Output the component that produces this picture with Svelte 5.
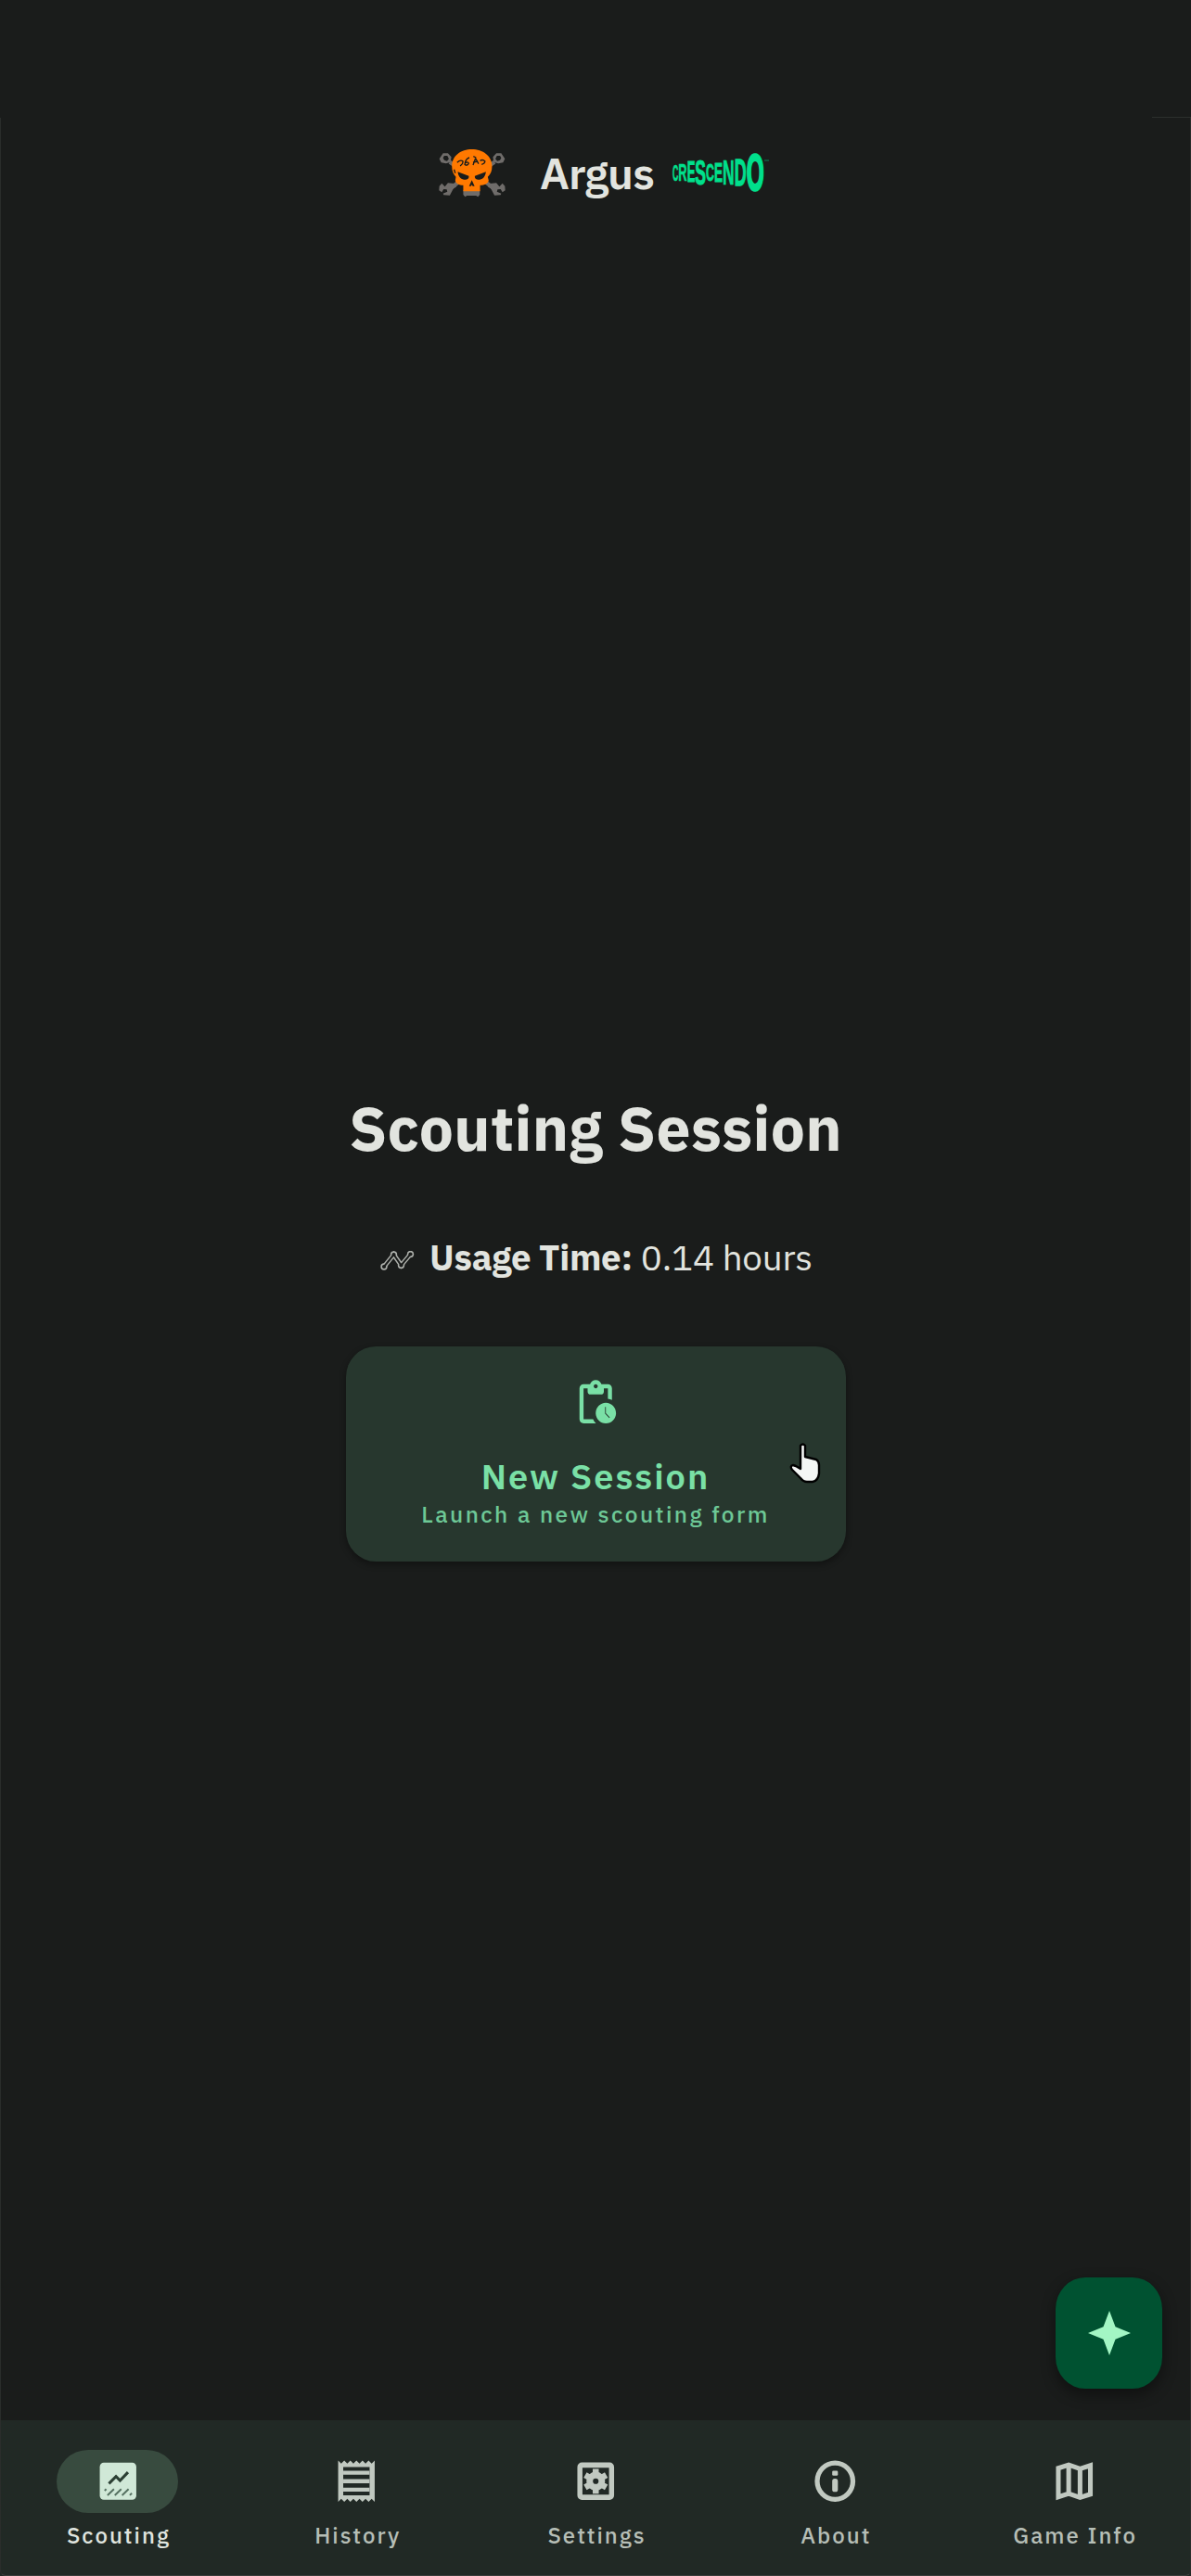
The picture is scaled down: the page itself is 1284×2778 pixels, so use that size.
<script>
  const tabs = [
    { id: 'scouting', label: 'Scouting', active: true },
    { id: 'history', label: 'History' },
    { id: 'settings', label: 'Settings' },
    { id: 'about', label: 'About' },
    { id: 'game', label: 'Game Info' }
  ];

  // Season wordmark: [char, left, slot width, cap top, cap height, stroke, advance at 100px]
  const wordmark = [
    ['C', 0, 19, 40, 52, 0.5, 72.2],
    ['R', 19, 28, 38, 54, 0.4, 72.2],
    ['E', 47, 26, 32, 65, 0.7, 66.7],
    ['S', 73, 35, 28, 76, 0.9, 66.7],
    ['C', 108, 27, 38, 56, 0.6, 72.2],
    ['E', 135, 27, 34, 62, 0.7, 66.7],
    ['N', 162, 38, 26, 78, 0.5, 72.2],
    ['D', 200, 39, 22, 87, 1.1, 72.2],
    ['O', 239, 57, 4, 118, 2, 77.8]
  ];
  const zigzag = 'M4 17L14.500 4L22.500 15.500L32.500 3.500';
  const dots = [[4, 17], [14.5, 4], [22.5, 15.5], [32.5, 3.5]];
</script>

<div class="app">
  <header>
    <svg class="skull" viewBox="68 63 218 156" preserveAspectRatio="none">
      <g stroke="#6f6c6a" fill="none">
        <path d="M104 104L130 122M250 104L224 122M102 194L136 166M252 194L218 166" stroke-width="13" />
        <path d="M82 76L98 76L109 88L107 104L92 109L76 106L70 94ZM272 76L256 76L245 88L247 104L262 109L278 106L284 94Z" stroke-width="0" fill="#6f6c6a" />
      </g>
      <path fill="#6f6c6a" d="M70 182L78 173L88 184L98 172L120 174L126 184L116 190L104 212L84 211L82 206L96 200L94 193L84 192L78 202L69 196ZM284 182L276 173L266 184L256 172L234 174L228 184L238 190L250 212L270 211L272 206L258 200L260 193L270 192L276 202L285 196Z" />
      <g fill="#1a1c1b">
        <path d="M86 84L96 84L101 94L95 101L86 98L82 91ZM268 84L258 84L253 94L259 101L268 98L272 91Z" />
      </g>
      <path fill="#6f6c6a" d="M148 196H202V210L196 217L190 213H160L154 217L148 210Z" />
      <path fill="#ff7900" d="M176 63C140 63 111 84 111 118C111 134 116 145 124 152L122 164C124 174 134 179 148 179V199H203V179C218 179 228 174 231 164L228 152C237 145 242 134 242 118C242 84 212 63 176 63Z" />
      <g fill="#1a1c1b">
        <path d="M130 136L166 149C168 158 160 162 150 161C138 159 132 150 130 136Z" />
        <path d="M222 136L186 149C184 158 192 162 202 161C214 159 220 150 222 136Z" />
        <path d="M176 163L167 182H173L176 178L179 182H185Z" />
      </g>
      <g fill="none" stroke="#1a1c1b" stroke-width="4">
        <path d="M128 106Q138 96 146 101Q150 107 138 117M168 90Q155 94 153 112Q162 118 166 108Q162 102 156 107M181 86L190 90M180 114L188 92L198 110M180 105L196 102M203 100Q212 94 219 102Q218 110 208 112M118 128L122 140" />
      </g>
    </svg>
    <h1>Argus</h1>
    <svg class="wordmark" viewBox="0 0 312 126" preserveAspectRatio="none">
      {#each wordmark as [ch, x, w, top, h, stroke, adv]}
        <text
          transform="translate({x} {top + h}) scale({w / adv} {h / 70})"
          font-size="100"
          stroke-width={stroke}>{ch}</text>
      {/each}
      <path d="M297 27H312" stroke="#00e08c" stroke-width="3" opacity=".5" />
    </svg>
  </header>

  <main>
    <h2>Scouting Session</h2>
    <p class="usage">
      <svg viewBox="0 0 37 21">
        <path d={zigzag} fill="none" stroke="#aeb1ac" stroke-width="5" />
        {#each dots as [cx, cy]}
          <circle {cx} {cy} r="3.700" fill="#aeb1ac" />
        {/each}
        <path d={zigzag} fill="none" stroke="#1a1c1b" stroke-width="2" />
        {#each dots as [cx, cy]}
          <circle {cx} {cy} r="2.100" fill="#1a1c1b" />
        {/each}
      </svg>
      <strong>Usage Time:</strong><span>0.14 hours</span>
    </p>
    <button class="session">
      <svg class="icon" viewBox="0 0 24 24" preserveAspectRatio="none">
        <path d="M17 12c-2.760 0-5 2.240-5 5s2.240 5 5 5 5-2.240 5-5-2.240-5-5-5zm1.650 7.350L16.600 17.300V14h.4v3.050l1.950 2zM18 3h-3.180C14.400 1.840 13.300 1 12 1s-2.400.84-2.820 2H6c-1.100 0-2 .9-2 2v15c0 1.100.9 2 2 2h6.110c-.59-.57-1.070-1.250-1.420-2H6V5h2v1.500C8 7.500 8.500 8 9.500 8h5c1 0 1.500-.5 1.500-1.500V5h2v5.080c.71.1 1.380.31 2 .6V5c0-1.100-.9-2-2-2zm-6 2c-.55 0-1-.45-1-1s.45-1 1-1 1 .45 1 1-.45 1-1 1z" />
      </svg>
      <span class="title">New Session</span>
      <span class="sub">Launch a new scouting form</span>
      <svg class="cursor" viewBox="0 0 34 44">
        <path d="M12 3Q14.500 0 17 3V15L29 18Q32 20 32 24V33Q31 41 25 42H19Q15 42 12 38L3 29Q0 25 4 24L7 25L12 28Z" fill="#f4f6f5" stroke="#000" stroke-width="2.400" stroke-linejoin="round" />
      </svg>
    </button>
  </main>

  <button class="fab" aria-label="Highlights">
    <svg viewBox="0 0 46 48" preserveAspectRatio="none">
      <path d="M23 0L29.500 17.300L46 24L29.500 30.700L23 48L16.500 30.700L0 24L16.500 17.300Z" />
    </svg>
  </button>

  <nav>
    {#each tabs as tab}
      <div class="tab" class:active={tab.active}>
        <div class="pill">
          <svg class="icon" viewBox="0 0 24 24" preserveAspectRatio="none">
            {#if tab.id === 'scouting'}
              <rect x="3" y="3" width="18" height="18" rx="2" />
              <path d="M7.500 13.200L11 9.700L13 11.700L16.900 7.700" fill="none" stroke="#2c4034" stroke-width="1.400" />
              <path d="M5.400 16.600L6.200 15.800M6.800 18.800L10 15.800M10.400 18.800L13.600 15.800M14 18.800L17.200 15.800M17.800 18.800L18.800 17.800" fill="none" stroke="#557060" stroke-width=".9" />
            {:else if tab.id === 'history'}
              <path d="M19.500 3.500L18 2l-1.500 1.500L15 2l-1.500 1.500L12 2l-1.500 1.500L9 2 7.500 3.500 6 2 4.500 3.500 3 2v20l1.500-1.500L6 22l1.500-1.500L9 22l1.500-1.500L12 22l1.500-1.500L15 22l1.500-1.500L18 22l1.500-1.500L21 22V2l-1.500 1.500zM18.500 18.800H5.500V5.200h13v13.600z" />
              <path d="M5.500 6.900h13v2h-13zM5.500 11h13v2h-13zM5.500 15.100h13v2h-13z" />
            {:else if tab.id === 'settings'}
              <rect x="4.200" y="4.200" width="15.600" height="15.600" rx="1" fill="none" stroke="currentColor" stroke-width="2.500" />
              <circle cx="12" cy="12" r="3" fill="none" stroke="currentColor" stroke-width="3.200" />
              <path d="M12 6v3M12 15v3M6.800 9l2.600 1.500M14.600 13.500l2.600 1.500M6.800 15l2.600-1.500M14.600 10.500l2.600-1.500" stroke="currentColor" stroke-width="3" />
            {:else if tab.id === 'about'}
              <circle cx="12" cy="12" r="8.800" fill="none" stroke="currentColor" stroke-width="2.400" />
              <rect x="10.600" y="6.900" width="2.800" height="2.400" rx=".6" />
              <rect x="10.600" y="10.800" width="2.800" height="6.400" rx="1.200" />
            {:else}
              <path d="M4.100 5.700L9.200 4.100L14.800 6L19.900 4.400V18.300L14.800 19.900L9.200 18L4.100 19.600ZM9.200 4V18M14.800 6V20" fill="none" stroke="currentColor" stroke-width="2.300" />
            {/if}
          </svg>
        </div>
        <span class="label">{tab.label}</span>
      </div>
    {/each}
  </nav>
</div>

<style>
  :global(body) {
    background: #1a1c1b;
  }
  .app {
    position: relative;
    display: flex;
    flex-direction: column;
    width: 1284px;
    height: 2778px;
    box-sizing: border-box;
    overflow: hidden;
    background: #1a1c1b;
    color: #e2e4df;
    font-family: 'IBM Plex Sans', 'Open Sans', 'Noto Sans', sans-serif;
  }
  /* Hairline device edge */
  .app::after {
    content: '';
    position: absolute;
    inset: 127px 0 0;
    border: 1px solid #2a2d2b;
    border-top: 0;
    border-bottom-color: #3a3d3b;
    border-radius: 0 0 6px 6px;
    pointer-events: none;
  }
  .app::before {
    content: '';
    position: absolute;
    top: 126px;
    right: 0;
    width: 42px;
    height: 1px;
    background: #2c2f2d;
  }
  h1, h2, p {
    margin: 0;
    white-space: nowrap;
  }
  header {
    display: flex;
    align-items: flex-start;
    height: 120px;
    padding: 161px 0 0 473px;
  }
  .skull {
    width: 72px;
    height: 52px;
  }
  h1 {
    width: 122px;
    margin: -7px 0 0 37px;
    font-size: 47.5px;
    line-height: 64px;
    font-weight: 600;
    letter-spacing: -0.8px;
  }
  .wordmark {
    width: 104px;
    height: 42px;
    margin: 3px 0 0 21px;
    overflow: visible;
  }
  .wordmark text {
    fill: #00e08c;
    stroke: #00e08c;
    vector-effect: non-scaling-stroke;
    font-family: 'Liberation Sans', sans-serif;
    font-weight: 700;
  }
  main {
    display: flex;
    flex-direction: column;
    align-items: center;
    padding-top: 890px;
  }
  h2 {
    font-size: 66px;
    line-height: 90px;
    font-weight: 700;
    letter-spacing: 0.3px;
  }
  .usage {
    display: flex;
    align-items: center;
    margin-top: 69px;
    padding-left: 2px;
    font-size: 38.5px;
    line-height: 52px;
  }
  .usage svg {
    width: 37px;
    height: 21px;
    margin: 6px 16px 0 0;
  }
  .usage strong {
    letter-spacing: -0.3px;
    margin-right: 9px;
  }
  .usage span {
    letter-spacing: -0.2px;
  }
  button {
    border: 0;
    padding: 0;
    font-family: inherit;
  }
  .session {
    position: relative;
    display: flex;
    flex-direction: column;
    align-items: center;
    width: 539px;
    height: 232px;
    margin-top: 70px;
    padding-top: 34px;
    border-radius: 32px / 33px;
    background: #27372e;
    color: #7ae0a6;
    box-shadow: 0 3px 6px 1px rgba(0, 0, 0, 0.3);
  }
  .icon {
    width: 52.5px;
    height: 53.5px;
    fill: currentColor;
  }
  .title {
    margin-top: 27px;
    font-size: 38px;
    line-height: 50px;
    font-weight: 600;
    letter-spacing: 2px;
  }
  .sub {
    font-size: 24.5px;
    line-height: 32px;
    font-weight: 500;
    letter-spacing: 2.4px;
    color: #6dc896;
  }
  .cursor {
    position: absolute;
    left: 478px;
    top: 104px;
    width: 34px;
    height: 44px;
  }
  .fab {
    display: flex;
    align-items: center;
    justify-content: center;
    width: 115px;
    height: 120px;
    margin: auto 31px 34px auto;
    border-radius: 32px / 34px;
    background: #005231;
    box-shadow: 0 6px 14px 2px rgba(0, 0, 0, 0.35);
  }
  .fab svg {
    width: 46px;
    height: 48px;
    fill: #a3f6c4;
  }
  nav {
    display: flex;
    height: 168px;
    flex: none;
    margin: 0 -3px 0 -2px;
    background: #212925;
  }
  .tab {
    flex: 1;
    display: flex;
    flex-direction: column;
    align-items: center;
    padding-top: 32px;
    color: #c1c9c1;
  }
  .pill {
    display: flex;
    align-items: center;
    justify-content: center;
    width: 131px;
    height: 68px;
    border-radius: 34px;
  }
  .active .pill {
    background: #384b3f;
    color: #d0e8d7;
  }
  .label {
    margin-top: 7px;
    padding-left: 2px;
    font-size: 24px;
    line-height: 34px;
    font-weight: 500;
    letter-spacing: 2px;
    white-space: nowrap;
    color: #b6beb6;
  }
  .active .label {
    color: #dfe3de;
  }
</style>
